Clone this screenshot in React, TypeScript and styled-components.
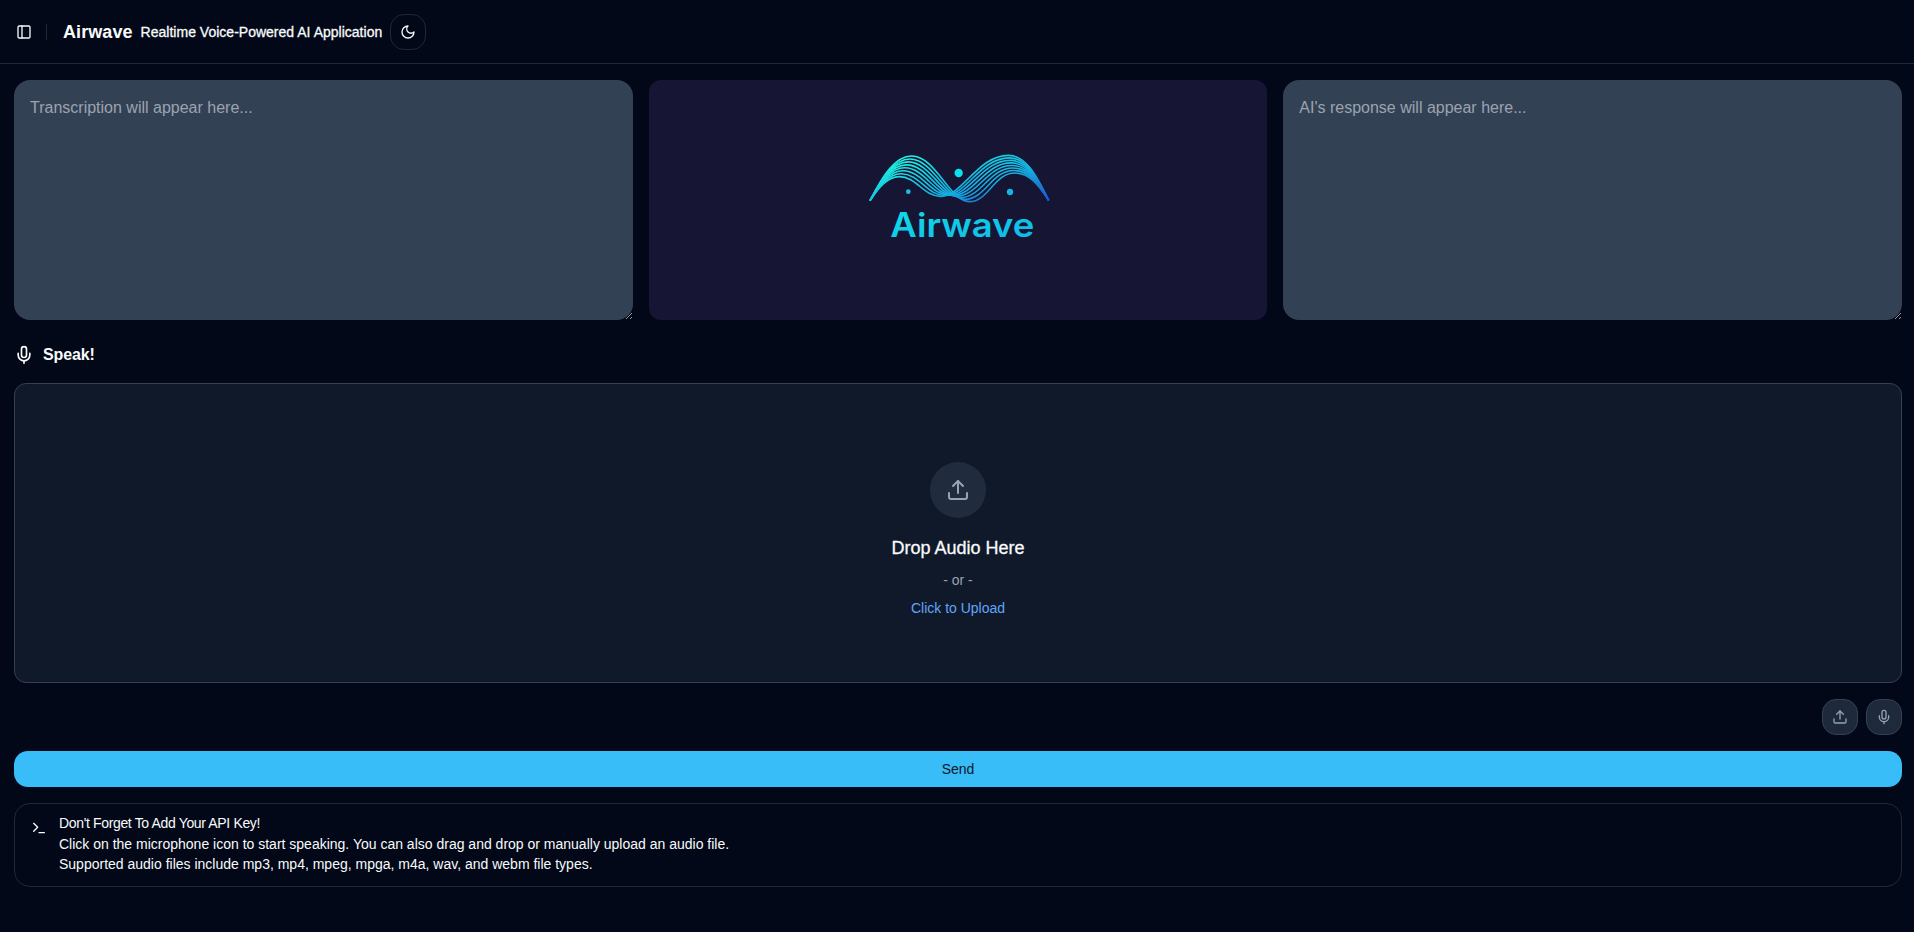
import React from "react";
import styled, { createGlobalStyle } from "styled-components";
import { PanelLeft, Mic, Upload, Terminal } from "lucide-react";

const GlobalStyle = createGlobalStyle`
  *, *::before, *::after { box-sizing: border-box; }
  body {
    margin: 0;
    background: #020817;
    color: #f8fafc;
    font-family: "Liberation Sans", Arial, sans-serif;
    font-size: 16px;
    line-height: 24px;
  }
  h1, h2, h5, p { margin: 0; }
  button { font-family: inherit; margin: 0; padding: 0; cursor: pointer; }
`;

const Page = styled.div`
  min-height: 100vh;
  display: flex;
  flex-direction: column;
`;

const Header = styled.header`
  height: 64px;
  flex: none;
  display: flex;
  align-items: center;
  gap: 8px;
  padding: 0 10px;
  border-bottom: 1px solid #1e293b;
`;

const SidebarTrigger = styled.button`
  width: 28px;
  height: 28px;
  display: flex;
  align-items: center;
  justify-content: center;
  border: 0;
  background: transparent;
  color: #f8fafc;
`;

const Divider = styled.span`
  width: 1px;
  height: 16px;
  margin-right: 8px;
  background: #1e293b;
`;

const Brand = styled.h1`
  font-size: 18px;
  line-height: 28px;
  font-weight: 700;
  letter-spacing: 0.08px;
`;

const Tagline = styled.p`
  font-size: 14px;
  line-height: 20px;
  letter-spacing: 0.01px;
  -webkit-text-stroke: 0.3px currentColor;
`;

const IconButton = styled.button<{ $filled?: boolean }>`
  width: 36px;
  height: 36px;
  display: flex;
  align-items: center;
  justify-content: center;
  border-radius: 14px;
  border: 1px solid ${(p) => (p.$filled ? "#334155" : "#1e293b")};
  background: ${(p) => (p.$filled ? "#1e293b" : "transparent")};
  color: ${(p) => (p.$filled ? "#94a3b8" : "#f8fafc")};
`;

const Main = styled.main`
  display: flex;
  flex-direction: column;
  gap: 16px;
  padding: 16px 12px 16px 14px;
`;

const Panels = styled.section`
  display: grid;
  grid-template-columns: repeat(3, 1fr);
  gap: 16px;
  height: 240px;
`;

const TextPanel = styled.textarea`
  display: block;
  width: 100%;
  height: 100%;
  margin: 0;
  padding: 16px;
  border: 0;
  outline: 0;
  border-radius: 16px;
  background: #334155;
  color: #f8fafc;
  font-family: inherit;
  font-size: 16px;
  line-height: 24px;
  color-scheme: dark;
  &::placeholder { color: #9ca3af; }
`;

const LogoPanel = styled.div`
  display: flex;
  justify-content: center;
  padding: 60px 0 0 4px;
  border-radius: 12px;
  background: #161533;
`;

const SpeakHeading = styled.h2`
  display: flex;
  align-items: center;
  gap: 9px;
  height: 31px;
  padding-top: 7px;
  font-size: 16px;
  line-height: 24px;
  font-weight: 700;
  letter-spacing: -0.15px;
`;

const DropZone = styled.div`
  height: 300px;
  display: flex;
  flex-direction: column;
  align-items: center;
  padding-top: 78px;
  border: 1px solid #334155;
  border-radius: 12px;
  background: #101929;
`;

const UploadBadge = styled.div`
  width: 56px;
  height: 56px;
  display: flex;
  align-items: center;
  justify-content: center;
  border-radius: 50%;
  background: #202c3e;
  color: #94a3b8;
`;

const DropTitle = styled.p`
  margin-top: 16px;
  font-size: 18px;
  line-height: 28px;
  -webkit-text-stroke: 0.3px currentColor;
`;

const DropHint = styled.p<{ $link?: boolean }>`
  margin-top: 8px;
  font-size: 14px;
  line-height: 20px;
  color: ${(p) => (p.$link ? "#60a5fa" : "#94a3b8")};
`;

const Actions = styled.div`
  display: flex;
  justify-content: flex-end;
  gap: 8px;
`;

const SendButton = styled.button`
  height: 36px;
  border: 0;
  border-radius: 14px;
  background: #38bdf8;
  color: #0f172a;
  font-size: 14px;
  line-height: 20px;
`;

const Notice = styled.aside`
  display: flex;
  gap: 12px;
  height: 84px;
  padding: 12px 16px;
  border: 1px solid #1e293b;
  border-radius: 16px;
  font-size: 14px;
`;

const NoticeIcon = styled.span`
  display: flex;
  padding-top: 4px;
`;

const NoticeTitle = styled.h5`
  margin-bottom: 4px;
  font-size: 14px;
  line-height: 14px;
  font-weight: 400;
  letter-spacing: -0.35px;
`;

const NoticeText = styled.p`
  font-size: 14px;
  line-height: 20px;
`;

function MoonIcon() {
  return (
    <svg
      width="16"
      height="16"
      viewBox="0 0 24 24"
      fill="none"
      stroke="currentColor"
      strokeWidth="2"
      strokeLinecap="round"
      strokeLinejoin="round"
    >
      <path d="M12 3a6 6 0 0 0 9 9 9 9 0 1 1-9-9Z" />
    </svg>
  );
}

const mix = (a: number, b: number, t: number) => a + (b - a) * t;

// Each strand runs tip - crest - trough - crest - tip; the bundle crosses over at the trough.
const WAVES = Array.from({ length: 8 }, (_, i) => {
  const t = i / 7;
  const s = [30, 182];
  const p1 = [mix(155, 118, t), mix(48, 110, t)];
  const v = [mix(328, 242, t), mix(185, 169, t) - 40 * t * (1 - t)];
  const p2 = [mix(464, 445, t), mix(99, 46, t)];
  const e = [566, 181];
  return [
    `M${s[0]} ${s[1]}`,
    `C${mix(s[0], p1[0], 0.3)} ${mix(s[1], p1[1], 0.55)} ${mix(s[0], p1[0], 0.6)} ${p1[1]} ${p1[0]} ${p1[1]}`,
    `C${mix(p1[0], v[0], 0.42)} ${p1[1]} ${mix(p1[0], v[0], mix(0.66, 0.58, t))} ${v[1]} ${v[0]} ${v[1]}`,
    `C${mix(v[0], p2[0], mix(0.42, 0.32, t))} ${v[1]} ${mix(v[0], p2[0], 0.55)} ${p2[1]} ${p2[0]} ${p2[1]}`,
    `C${mix(p2[0], e[0], 0.42)} ${p2[1]} ${mix(p2[0], e[0], 0.68)} ${mix(p2[1], e[1], 0.4)} ${e[0]} ${e[1]}`,
  ].join(" ");
});

function AirwaveLogo() {
  return (
    <svg width="200" height="110" viewBox="0 0 600 330" role="img" aria-label="Airwave">
      <defs>
        <linearGradient id="wave" gradientUnits="userSpaceOnUse" x1="155" y1="48" x2="230" y2="312">
          <stop offset="0" stopColor="#20f2e0" />
          <stop offset="0.28" stopColor="#15cbe2" />
          <stop offset="0.5" stopColor="#14b0e2" />
          <stop offset="0.66" stopColor="#1a84d0" />
          <stop offset="0.9" stopColor="#1a50dc" />
        </linearGradient>
        <linearGradient id="word" x1="0" y1="0" x2="1" y2="1">
          <stop offset="0" stopColor="#0fdfe8" />
          <stop offset="1" stopColor="#12b4e8" />
        </linearGradient>
      </defs>
      <g fill="none" stroke="url(#wave)" strokeWidth="4.8">
        {WAVES.map((d) => (
          <path key={d} d={d} />
        ))}
      </g>
      <circle cx="296" cy="99" r="12.5" fill="#0be0ee" />
      <circle cx="145" cy="155" r="7" fill="#14c4dc" />
      <circle cx="450" cy="156" r="9.5" fill="#14b4e4" />
      <text
        x="91"
        y="290"
        fill="url(#word)"
        fontFamily="Inter, sans-serif"
        fontWeight="600"
        fontSize="100"
        textLength="432"
        lengthAdjust="spacingAndGlyphs"
      >
        Airwave
      </text>
    </svg>
  );
}

export default function App() {
  return (
    <Page>
      <GlobalStyle />
      <Header>
        <SidebarTrigger aria-label="Toggle sidebar">
          <PanelLeft size={16} />
        </SidebarTrigger>
        <Divider />
        <Brand>Airwave</Brand>
        <Tagline>Realtime Voice-Powered AI Application</Tagline>
        <IconButton aria-label="Toggle theme">
          <MoonIcon />
        </IconButton>
      </Header>
      <Main>
        <Panels>
          <TextPanel placeholder="Transcription will appear here..." />
          <LogoPanel>
            <AirwaveLogo />
          </LogoPanel>
          <TextPanel placeholder="AI's response will appear here..." />
        </Panels>
        <SpeakHeading>
          <Mic size={20} />
          Speak!
        </SpeakHeading>
        <DropZone>
          <UploadBadge>
            <Upload size={24} />
          </UploadBadge>
          <DropTitle>Drop Audio Here</DropTitle>
          <DropHint>- or -</DropHint>
          <DropHint $link>Click to Upload</DropHint>
        </DropZone>
        <Actions>
          <IconButton $filled aria-label="Upload audio">
            <Upload size={16} />
          </IconButton>
          <IconButton $filled aria-label="Record audio">
            <Mic size={16} />
          </IconButton>
        </Actions>
        <SendButton>Send</SendButton>
        <Notice>
          <NoticeIcon>
            <Terminal size={16} />
          </NoticeIcon>
          <div>
            <NoticeTitle>Don't Forget To Add Your API Key!</NoticeTitle>
            <NoticeText>
              Click on the microphone icon to start speaking. You can also drag and drop or manually upload an audio file.
            </NoticeText>
            <NoticeText>
              Supported audio files include mp3, mp4, mpeg, mpga, m4a, wav, and webm file types.
            </NoticeText>
          </div>
        </Notice>
      </Main>
    </Page>
  );
}
